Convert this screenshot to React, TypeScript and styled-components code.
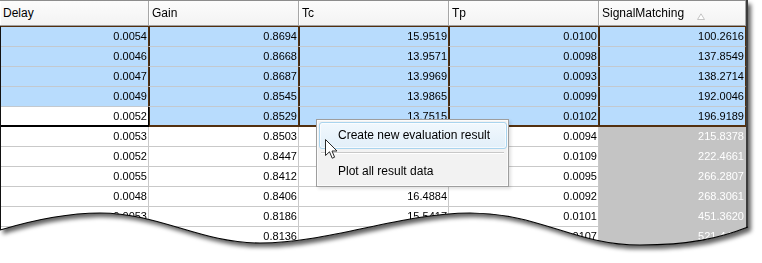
import React from 'react';
import styled, { createGlobalStyle, css } from 'styled-components';

const GlobalStyle = createGlobalStyle`
  html, body { margin: 0; padding: 0; background: #fff; }
  body {
    width: 762px;
    height: 263px;
    overflow: hidden;
    font-family: "Liberation Sans", Arial, sans-serif;
  }
`;

const WAVE =
  'M0 230 C40 218 70 213 100 213 C160 213 200 243 260 243 C330 243 400 213 470 213 C540 213 575 245 640 245 C690 245 720 238 748 227';
const CLIP =
  "path('M0 0 H748 V227 C720 238 690 245 640 245 C575 245 540 213 470 213 C400 213 330 243 260 243 C200 243 160 213 100 213 C70 213 40 218 0 230 Z')";

const BROWN = '#53300f';
const GRID = '#c9c9c9';

const Stage = styled.div`
  position: relative;
  width: 762px;
  height: 263px;
  overflow: hidden;
`;

const ShadowWrap = styled.div`
  width: 748px;
  height: 252px;
  filter: drop-shadow(3px 4px 2px rgba(0, 0, 0, 0.62));
`;

const Sheet = styled.div`
  box-sizing: border-box;
  width: 748px;
  height: 252px;
  background: #fff;
  clip-path: ${CLIP};
  border-right: 2px solid #3c3c3c;
  display: flex;
  flex-direction: column;
`;

const TopBand = styled.div`
  height: 3px;
  background: #e7e7e7;
  border-bottom: 1px solid #8d8d8d;
`;

const HeaderRow = styled.div`
  display: grid;
  grid-template-columns: 149px 150px 150px 150px 147px;
  height: 25px;
`;

const HeaderCell = styled.div`
  position: relative;
  box-sizing: border-box;
  height: 25px;
  padding-left: 3px;
  background: linear-gradient(#fcfcfc, #f3f3f3);
  border-right: 1px solid #a7a7a7;
  border-bottom: 1px solid #a0a0a0;
  box-shadow: inset 1px 0 0 #ffffff;
  font-size: 12px;
  line-height: 24px;
  color: #000;
  white-space: nowrap;
`;

const SortGlyph = styled.svg`
  position: absolute;
  left: 98px;
  top: 12px;
`;

const Body = styled.div`
  border-top: 1px solid ${BROWN};
  border-left: 1px solid #111;
  display: flex;
  flex-direction: column;
`;

const Row = styled.div`
  display: grid;
  grid-template-columns: 148px 150px 150px 150px 147px;
`;

type CellProps = {
  $sel?: boolean;
  $last?: boolean;
  $focus?: boolean;
  $dim?: boolean;
  $first?: boolean;
};

const Cell = styled.div<CellProps>`
  box-sizing: border-box;
  height: 20px;
  padding-right: 1px;
  text-align: right;
  font-size: 11px;
  line-height: 19px;
  color: #000;
  background: #fff;
  border-right: 1px solid ${GRID};
  border-bottom: 1px solid ${GRID};
  white-space: nowrap;
  overflow: hidden;

  ${(p) =>
    p.$sel &&
    css`
      background: #b8dcfd;
      border-right-color: ${BROWN};
      border-bottom-color: #c3c9cf;
      box-shadow: ${p.$first ? 'none' : 'inset 1px 0 0 #3a2a1a'};
    `}

  ${(p) =>
    p.$sel &&
    p.$last &&
    css`
      border-bottom-color: ${BROWN};
      box-shadow: ${p.$first ? '' : 'inset 1px 0 0 #3a2a1a, '}inset 0 -1px 0 ${BROWN};
    `}

  ${(p) =>
    p.$focus &&
    css`
      background: #fff;
      border-right-color: #000;
      border-bottom-color: #000;
      box-shadow: inset 0 -1px 0 #000;
    `}

  ${(p) =>
    p.$dim &&
    css`
      background: #c4c4c4;
      color: #fff;
      border-bottom-color: #c4c4c4;
      border-right-color: #c4c4c4;
    `}
`;

const EdgeOverlay = styled.svg`
  position: absolute;
  left: 0;
  top: 0;
  pointer-events: none;
`;

const Menu = styled.div`
  position: absolute;
  left: 316px;
  top: 119px;
  box-sizing: border-box;
  width: 193px;
  height: 68px;
  padding: 2px 2px 1px 1px;
  background: #f2f2f2;
  border: 1px solid #9e9e9e;
  box-shadow: inset 0 0 0 1px #fbfbfb, 2px 2px 3px rgba(0, 0, 0, 0.12);
  display: flex;
  flex-direction: column;
  font-size: 12px;
  color: #000;
`;

const MenuItem = styled.div<{ $hot?: boolean; $h: number }>`
  box-sizing: border-box;
  height: ${(p) => p.$h}px;
  width: 188px;
  margin-left: 1px;
  padding-left: 18px;
  line-height: ${(p) => p.$h - 2}px;
  border: 1px solid transparent;
  border-radius: 3px;
  white-space: nowrap;
  ${(p) =>
    p.$hot &&
    css`
      border-color: #a9d4ee;
      background: linear-gradient(#f1f8fd, #e2eff9);
      box-shadow: inset 0 0 0 1px rgba(255, 255, 255, 0.7);
    `}
`;

const MenuSep = styled.div`
  margin: 3px 2px 3px 3px;
  height: 1px;
  background: #c8c8c8;
  border-bottom: 1px solid #ffffff;
`;

const Cursor = styled.svg`
  position: absolute;
  left: 325px;
  top: 139px;
  pointer-events: none;
`;

const headers = ['Delay', 'Gain', 'Tc', 'Tp', 'SignalMatching'];

/* Tc values of rows 6–8 lie under the context menu and are not visible. */
const rows: string[][] = [
  ['0.0054', '0.8694', '15.9519', '0.0100', '100.2616'],
  ['0.0046', '0.8668', '13.9571', '0.0098', '137.8549'],
  ['0.0047', '0.8687', '13.9969', '0.0093', '138.2714'],
  ['0.0049', '0.8545', '13.9865', '0.0099', '192.0046'],
  ['0.0052', '0.8529', '13.7515', '0.0102', '196.9189'],
  ['0.0053', '0.8503', '', '0.0094', '215.8378'],
  ['0.0052', '0.8447', '', '0.0109', '222.4661'],
  ['0.0055', '0.8412', '', '0.0095', '266.2807'],
  ['0.0048', '0.8406', '16.4884', '0.0092', '268.3061'],
  ['0.0053', '0.8186', '15.5417', '0.0101', '451.3620'],
  ['0.0051', '0.8136', '15.7302', '0.0107', '521.4473'],
  ['0.0050', '0.8101', '16.0021', '0.0104', '544.9810'],
];

const SELECTED_ROWS = 5;

export default function App() {
  return (
    <>
      <GlobalStyle />
      <Stage>
        <ShadowWrap>
          <Sheet>
            <TopBand />
            <HeaderRow>
              {headers.map((h, i) => (
                <HeaderCell key={h}>
                  {h}
                  {i === 4 && (
                    <SortGlyph width="8" height="7" viewBox="0 0 8 7">
                      <path d="M0.5 6.5 L4 0.8 L7.5 6.5 Z" fill="#ffffff" stroke="#c4c4c4" strokeWidth="1" />
                    </SortGlyph>
                  )}
                </HeaderCell>
              ))}
            </HeaderRow>
            <Body>
              {rows.map((r, ri) => (
                <Row key={ri}>
                  {r.map((v, ci) => {
                    const sel = ri < SELECTED_ROWS;
                    return (
                      <Cell
                        key={ci}
                        $sel={sel}
                        $last={ri === SELECTED_ROWS - 1}
                        $first={ci === 0}
                        $focus={ri === SELECTED_ROWS - 1 && ci === 0}
                        $dim={!sel && ci === 4}
                      >
                        {v}
                      </Cell>
                    );
                  })}
                </Row>
              ))}
            </Body>
          </Sheet>
        </ShadowWrap>

        <EdgeOverlay width="762" height="263" viewBox="0 0 762 263">
          <path d={WAVE} fill="none" stroke="#000" strokeWidth="1.1" />
        </EdgeOverlay>

        <Menu>
          <MenuItem $hot $h={27}>Create new evaluation result</MenuItem>
          <MenuSep />
          <MenuItem $h={28}>Plot all result data</MenuItem>
        </Menu>

        <Cursor width="13" height="21" viewBox="0 0 13 21">
          <path
            d="M0.5 0.5 V16.5 L4.5 12.8 L7.2 19.2 L9.6 18.2 L7 12 H12 Z"
            fill="#ffffff"
            stroke="#2a2a2a"
            strokeWidth="1"
            strokeLinejoin="miter"
          />
        </Cursor>
      </Stage>
    </>
  );
}
